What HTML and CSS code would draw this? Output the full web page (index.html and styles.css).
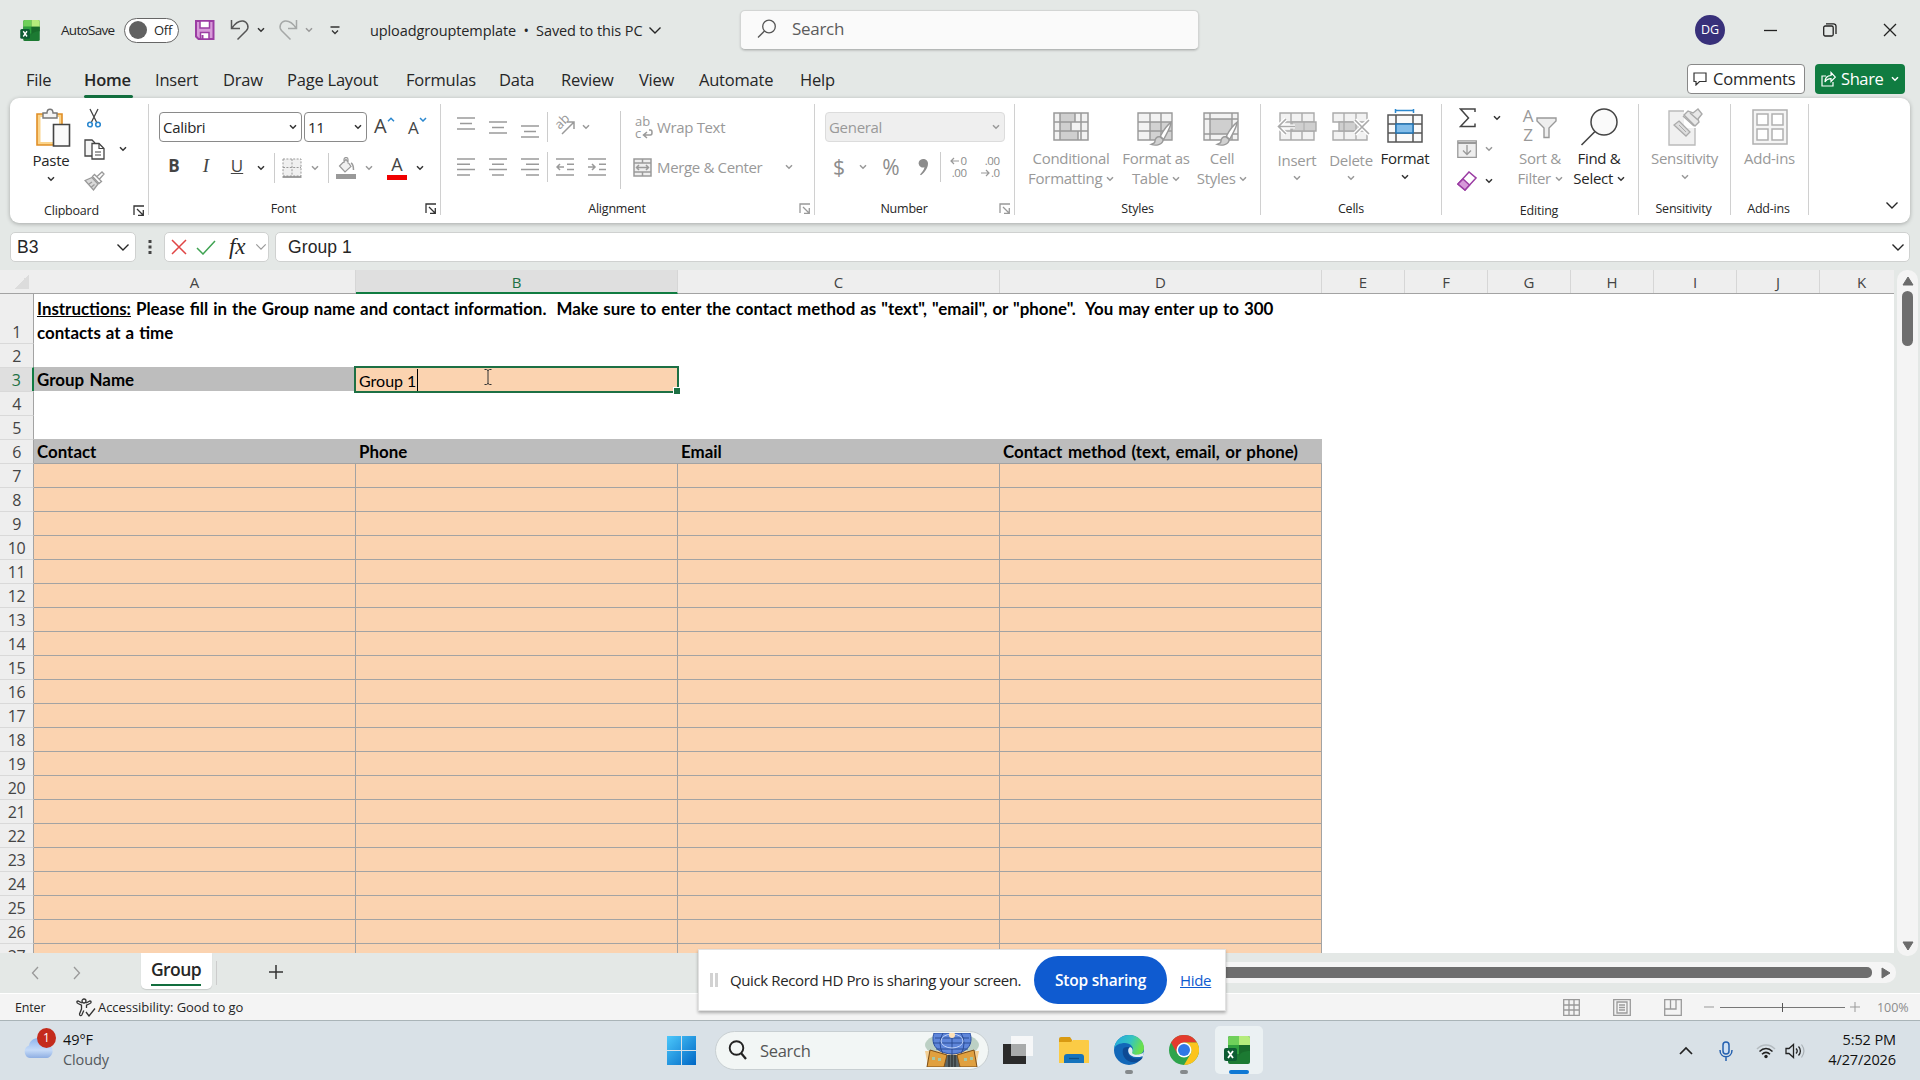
FILE: index.html
```html
<!DOCTYPE html>
<html lang="en">
<head>
    <meta charset="UTF-8">
    <meta name="viewport" content="width=device-width, initial-scale=1.0">
    <title>uploadgrouptemplate - Excel</title>
    <link rel="stylesheet" href="styles.css">
</head>
<body>
    <!-- Shared icons -->
    <svg class="defs" width="0" height="0">
        <symbol id="chev" viewBox="0 0 8 6"><path d="M1 1.2l3 3 3-3" fill="none" stroke="currentColor" stroke-width="1.5"/></symbol>
        <symbol id="chev-lg" viewBox="0 0 14 9"><path d="M1.5 1.5l5.5 5.5 5.5-5.5" fill="none" stroke="currentColor" stroke-width="1.4"/></symbol>
        <symbol id="launcher" viewBox="0 0 12 12"><path d="M1 10V1h10M4 4l6 6M10.3 5v5.3H5" fill="none" stroke="currentColor" stroke-width="1.3"/></symbol>
        <symbol id="excel" viewBox="0 0 26 28">
            <rect x="4" y="0" width="22" height="28" rx="2" fill="#1c7a32"/>
            <path d="M4 2a2 2 0 0 1 2-2h9v9H4z" fill="#6fd05a"/>
            <path d="M15 0h9a2 2 0 0 1 2 2v7H15z" fill="#b5ec7c"/>
            <path d="M4 9h11v9H4z" fill="#2e9f3e"/>
            <path d="M15 9h11v6c-6 0-11 2-11 6z" fill="#186b2b"/>
            <rect x="0" y="12" width="13" height="13" rx="2" fill="#0d5c33"/>
            <path d="M4 15l5 7M9 15l-5 7" stroke="#fff" stroke-width="1.8"/>
        </symbol>
        <symbol id="brush" viewBox="0 0 20 24"><path d="M18.5 2c-4 3-8 9-10 13l3 3C14 13 18 7 18.5 2z" fill="#fff" stroke="#999" stroke-width="1.3"/><path d="M8 15.5c-3-.5-4.500 2-4.500 4S1.500 22 0 22.500c4 1.500 11 .5 11-4.500z" fill="#d0d0d0" stroke="#999" stroke-width="1.3"/></symbol>
    </svg>

    <header class="titlebar">
        <svg class="logo" width="20" height="21"><use href="#excel"/></svg>
        <span class="autosave">AutoSave</span>
        <span class="toggle"><i></i>Off</span>
        <svg width="22" height="22" viewBox="0 0 22 22"><path d="M2 2h17.500v18H4.500L2 17.500z" fill="#d79ad9" stroke="#9b3da3" stroke-width="2"/><path d="M6 2h9.500v7H6z" fill="#fff" stroke="#9b3da3" stroke-width="1.5"/><path d="M6.500 13.500h8.500V20H6.500z" fill="#fff" stroke="#9b3da3" stroke-width="1.5"/><path d="M8.500 16v4" stroke="#9b3da3" stroke-width="2"/></svg>
        <svg width="20" height="22" viewBox="0 0 20 22"><path d="M1.500 1v8.500h8.500M2 9C5 4.500 9 1.500 13 2c4.500.8 6.500 6 3.500 9.500L7.500 20.500" fill="none" stroke="#555" stroke-width="1.5"/></svg>
        <svg class="chev" width="8" height="6"><use href="#chev"/></svg>
        <svg width="20" height="22" viewBox="0 0 20 22"><path d="M18.500 1v8.500H10M18 9C15 4.500 11 1.500 7 2 2.500 2.800.5 8 3.500 11.500L12.500 20.500" fill="none" stroke="#a5a8a7" stroke-width="1.5"/></svg>
        <svg class="chev dim" width="8" height="6"><use href="#chev"/></svg>
        <svg width="10" height="9" viewBox="0 0 10 9"><path d="M.5 1h9M2 4.500l3 3 3-3" fill="none" stroke="#333" stroke-width="1.3"/></svg>
        <span class="doc-name">uploadgrouptemplate&nbsp; •&nbsp; Saved to this PC</span>
        <svg width="14" height="9"><use href="#chev-lg"/></svg>
        <div class="title-search">
            <svg width="20" height="20" viewBox="0 0 20 20"><circle cx="12" cy="7.500" r="6.300" fill="none" stroke="#555" stroke-width="1.3"/><path d="M7.500 12L1 18.500" stroke="#555" stroke-width="1.3"/></svg>
            Search
        </div>
        <span class="avatar">DG</span>
        <svg width="13" height="13" viewBox="0 0 13 13"><path d="M0 6.500h13" stroke="#222" stroke-width="1.3"/></svg>
        <svg width="14" height="14" viewBox="0 0 14 14"><rect x=".7" y="3" width="9.500" height="10" rx="1.500" fill="none" stroke="#222" stroke-width="1.3"/><path d="M3 .8h7.500a2.500 2.500 0 0 1 2.500 2.500V11" fill="none" stroke="#222" stroke-width="1.3"/></svg>
        <svg width="14" height="14" viewBox="0 0 14 14"><path d="M1 1l12 12M13 1L1 13" stroke="#222" stroke-width="1.3"/></svg>
    </header>

    <nav class="tabs">
        <ul>
            <li>File</li>
            <li class="active">Home</li>
            <li>Insert</li>
            <li>Draw</li>
            <li>Page Layout</li>
            <li>Formulas</li>
            <li>Data</li>
            <li>Review</li>
            <li>View</li>
            <li>Automate</li>
            <li>Help</li>
        </ul>
        <button class="comments">
            <svg width="14" height="14" viewBox="0 0 14 14"><path d="M1 1h12v8.500H6.500L3 13V9.500H1z" fill="none" stroke="#333" stroke-width="1.2"/></svg>
            <span>Comments</span>
        </button>
        <button class="share">
            <svg width="15" height="16" viewBox="0 0 15 16"><path d="M5 5H1v10h11v-4M4 11c0-4 2-6.500 6-6.500V1.500l4.300 4.700L10 10.500V7.700C7 7.700 5.300 8.500 4 11z" fill="none" stroke="#fff" stroke-width="1.2"/></svg>
            <span>Share</span>
            <svg width="8" height="6"><use href="#chev"/></svg>
        </button>
    </nav>

    <section class="ribbon">
        <div class="group clipboard">
            <div class="body">
                <div class="big paste">
                    <svg width="36" height="40" viewBox="0 0 36 40"><path d="M2 6h25v31H2z" fill="#fbd48b" stroke="#e08e26" stroke-width="1.6"/><path d="M5.500 9h18.500v25H5.500z" fill="#fff"/><path d="M8 10V5h4c0-5 6-5 6 0h4v5z" fill="#f4f4f4" stroke="#777" stroke-width="1.4"/><path d="M18.500 16.500h16V38h-16z" fill="#fafafa" stroke="#444" stroke-width="1.6"/></svg>
                    <span>Paste</span>
                    <svg class="chev" width="8" height="6"><use href="#chev"/></svg>
                </div>
                <div class="clip-tools">
                    <svg width="14" height="20" viewBox="0 0 14 20"><path d="M3 1l6.500 13M11 1L4.500 14" stroke="#444" stroke-width="1.3"/><circle cx="3" cy="16.500" r="2.300" fill="none" stroke="#2b88cf" stroke-width="1.6"/><circle cx="11" cy="16.500" r="2.300" fill="none" stroke="#2b88cf" stroke-width="1.6"/></svg>
                    <span></span>
                    <svg width="21" height="21" viewBox="0 0 21 21"><path d="M8 17H1V1h7l3 3" fill="#f5f5f5" stroke="#444" stroke-width="1.3"/><path d="M8 4.500h7l5 5V20H8z" fill="#fff" stroke="#444" stroke-width="1.3"/><path d="M15 4.500v5h5M11 13h6M11 16h6" fill="none" stroke="#444" stroke-width="1.2"/></svg>
                    <svg class="chev" width="8" height="6"><use href="#chev"/></svg>
                    <svg width="21" height="20" viewBox="0 0 21 20"><path d="M1 9.500l7-3 6 6.500-4.500 6zM5 13l3-2M7.500 16l3-2.500" fill="#d9d9d9" stroke="#999" stroke-width="1.3"/><path d="M8.500 5.500l2-2 7 7-2.500 2zM13 5.500L18 1l2 2-4.500 5" fill="#fff" stroke="#999" stroke-width="1.3"/></svg>
                    <span></span>
                </div>
            </div>
            <div class="label">Clipboard <svg class="launch" width="12" height="12"><use href="#launcher"/></svg></div>
        </div>

        <div class="group font">
            <div class="body">
                <div class="rows">
                    <div class="font-row1">
                        <div class="combo">Calibri <svg class="chev" width="8" height="6"><use href="#chev"/></svg></div>
                        <div class="combo">11 <svg class="chev" width="8" height="6"><use href="#chev"/></svg></div>
                        <span class="grow">A<svg width="8" height="5" viewBox="0 0 8 5"><path d="M1 4.200l3-3 3 3" fill="none" stroke="#2b88cf" stroke-width="1.5"/></svg></span>
                        <span class="grow shrink">A<svg width="8" height="5" viewBox="0 0 8 5"><path d="M1 1l3 3 3-3" fill="none" stroke="#2b88cf" stroke-width="1.5"/></svg></span>
                    </div>
                    <div class="font-row2">
                        <b>B</b>
                        <i>I</i>
                        <u>U</u>
                        <svg class="chev" width="8" height="6"><use href="#chev"/></svg>
                        <span class="sep"></span>
                        <svg width="20" height="20" viewBox="0 0 20 20"><path d="M1 1h18v17H1z" fill="#f0f0f0" stroke="#999" stroke-dasharray="2 1.4"/><path d="M10 1v17M1 9.500h18" stroke="#999" stroke-dasharray="2 1.4"/><path d="M.5 19h19" stroke="#888" stroke-width="1.6"/></svg>
                        <svg class="chev dim" width="8" height="6"><use href="#chev"/></svg>
                        <span class="sep"></span>
                        <svg width="20" height="22" viewBox="0 0 20 22"><path d="M3.500 9L10 2.500l5 7-6 5.500zM8 6V2.500a2 2 0 0 1 4 0v4" fill="#f0f0f0" stroke="#999" stroke-width="1.2"/><path d="M15 6c2 1 2.500 3 2.500 7" fill="none" stroke="#999" stroke-width="1.5"/><path d="M0 17h20v5H0z" fill="#999"/></svg>
                        <svg class="chev dim" width="8" height="6"><use href="#chev"/></svg>
                        <span class="font-color">A</span>
                        <svg class="chev" width="8" height="6"><use href="#chev"/></svg>
                    </div>
                </div>
            </div>
            <div class="label">Font <svg class="launch" width="12" height="12"><use href="#launcher"/></svg></div>
        </div>

        <div class="group alignment">
            <div class="body">
                <div class="rows">
                    <div class="align-row first">
                        <svg class="up" width="18" height="13" viewBox="0 0 18 13"><path d="M0 1h18M3 6.500h12M0 12h18"/></svg>
                        <svg width="18" height="13" viewBox="0 0 18 13"><path d="M0 1h18M3 6.500h12M0 12h18"/></svg>
                        <svg class="down" width="18" height="13" viewBox="0 0 18 13"><path d="M0 1h18M3 6.500h12M0 12h18"/></svg>
                        <span class="sep"></span>
                        <span class="orient"><em>ab</em><svg width="20" height="20" viewBox="0 0 20 20"><path d="M7 18L18.500 6.500M12 6h7v7"/></svg></span>
                        <svg class="chev dim" width="8" height="6"><use href="#chev"/></svg>
                    </div>
                    <div class="align-row">
                        <svg width="18" height="18" viewBox="0 0 18 18"><path d="M0 1h18M0 6.300h13M0 11.600h18M0 17h13"/></svg>
                        <svg width="18" height="18" viewBox="0 0 18 18"><path d="M0 1h18M3 6.300h12M0 11.600h18M3 17h12"/></svg>
                        <svg width="18" height="18" viewBox="0 0 18 18"><path d="M0 1h18M5 6.300h13M0 11.600h18M5 17h13"/></svg>
                        <span class="sep"></span>
                        <svg width="18" height="18" viewBox="0 0 18 18"><path d="M0 1h18M11 6.300h7M11 11.600h7M0 17h18M8 9H1.500M4 6L1 9l3 3"/></svg>
                        <svg width="18" height="18" viewBox="0 0 18 18"><path d="M0 1h18M11 6.300h7M11 11.600h7M0 17h18M0 9h6.500M4 6l3 3-3 3"/></svg>
                    </div>
                </div>
                <div class="wrap-merge">
                    <div>
                        <span class="wrap-icon"><span>ab</span><span>c</span><svg width="11" height="10" viewBox="0 0 11 10"><path d="M7 1h1.500c2 0 2 5 0 5H2M5 3L1.500 6l3.500 3"/></svg></span>
                        <span>Wrap Text</span>
                    </div>
                    <div>
                        <svg width="19" height="19" viewBox="0 0 19 19"><path d="M1 1h17v17H1zM1 5h17M1 14h17M9.500 1v4M9.500 14v4" fill="#eee"/><path d="M3.500 9.500h12M6 7L3.500 9.500 6 12M13 7l2.500 2.500L13 12"/></svg>
                        <span>Merge &amp; Center</span>
                        <svg class="chev dim" width="8" height="6"><use href="#chev"/></svg>
                    </div>
                </div>
            </div>
            <div class="label">Alignment <svg class="launch dim" width="12" height="12"><use href="#launcher"/></svg></div>
        </div>

        <div class="group number">
            <div class="body">
                <div class="rows">
                    <div class="combo off">General <svg class="chev dim" width="8" height="6"><use href="#chev"/></svg></div>
                    <div class="number-row">
                        <span class="dollar">$</span>
                        <svg class="chev dim" width="8" height="6"><use href="#chev"/></svg>
                        <span class="percent">%</span>
                        <svg width="11" height="18" viewBox="0 0 11 18"><path d="M5 1a4.300 4.300 0 1 0 1.500 8.300C6 12 4 14.500 2 16.500l1 .8C7 14 10 10 10 5.500 10 3 8 1 5 1z" fill="#8c8c8c"/></svg>
                        <span class="sep"></span>
                        <span class="dec"><span><svg width="9" height="8" viewBox="0 0 9 8"><path d="M9 4H1M4 1L1 4l3 3"/></svg>0</span><span>.00</span></span>
                        <span class="dec"><span>.00</span><span><svg width="9" height="8" viewBox="0 0 9 8"><path d="M0 4h8M5 1l3 3-3 3"/></svg>.0</span></span>
                    </div>
                </div>
            </div>
            <div class="label">Number <svg class="launch dim" width="12" height="12"><use href="#launcher"/></svg></div>
        </div>

        <div class="group styles">
            <div class="body">
                <div class="big off">
                    <svg width="36" height="36" viewBox="0 0 36 36"><path d="M1 4h34v27H1z" fill="#f2f2f2"/><path d="M7 4h15v9H7zM7 13h11v9H7zM7 22h18v9H7z" fill="#cfcfcf"/><path d="M1 4h34v27H1zM1 13h34M1 22h34M7 4v27M22 4v9M18 13v9M25 22v9M28 4v27" fill="none" stroke="#999" stroke-width="1.5"/></svg>
                    <span>Conditional<br>Formatting <svg class="chev" width="8" height="6"><use href="#chev"/></svg></span>
                </div>
                <div class="big off">
                    <svg width="38" height="38" viewBox="0 0 38 38"><path d="M1 5h34v27H1z" fill="#f2f2f2"/><path d="M13 14h22v18H13z" fill="#d2d2d2"/><path d="M1 5h34v27H1zM1 14h34M1 23h34M13 5v27M24 5v27" fill="none" stroke="#999" stroke-width="1.4"/><use href="#brush" x="12" y="12" width="26" height="26"/></svg>
                    <span>Format as<br>Table <svg class="chev" width="8" height="6"><use href="#chev"/></svg></span>
                </div>
                <div class="big off">
                    <svg width="38" height="38" viewBox="0 0 38 38"><path d="M1 5h34v27H1z" fill="#f2f2f2"/><path d="M7 11h22v15H7z" fill="#cfcfcf"/><path d="M1 5h34v27H1zM1 11h34M1 26h34M7 5v27M29 5v27" fill="none" stroke="#999" stroke-width="1.4"/><use href="#brush" x="12" y="12" width="26" height="26"/></svg>
                    <span>Cell<br>Styles <svg class="chev" width="8" height="6"><use href="#chev"/></svg></span>
                </div>
            </div>
            <div class="label">Styles</div>
        </div>

        <div class="group cells">
            <div class="body">
                <div class="big off low">
                    <svg width="40" height="36" viewBox="0 0 40 36"><path d="M3 4h34v27H3z" fill="#f2f2f2"/><path d="M3 4h34v27H3zM14 4v27M25 4v27M3 13h34M3 22h34" fill="none" stroke="#aaa" stroke-width="1.4"/><path d="M15 13h24v9H15z" fill="#cfcfcf" stroke="#aaa" stroke-width="1.4"/><path d="M27 13v9" stroke="#aaa"/><path d="M18 17.500H3M9 10l-8 7.500L9 25" fill="none" stroke="#fff" stroke-width="4"/><path d="M18 17.500H2M9 10l-7.500 7.500L9 25" fill="none" stroke="#aaa" stroke-width="1.6"/></svg>
                    <span>Insert</span>
                    <svg class="chev" width="8" height="6"><use href="#chev"/></svg>
                </div>
                <div class="big off low">
                    <svg width="38" height="36" viewBox="0 0 38 36"><path d="M1 4h34v9H1zM1 22h34v9H1z" fill="#f2f2f2" stroke="#aaa" stroke-width="1.4"/><path d="M7 13h20v9H7z" fill="#cfcfcf" stroke="#aaa" stroke-width="1.4"/><path d="M12 4v27M24 4v27" stroke="#aaa" stroke-width="1.3"/><path d="M23 11l14 14M37 11L23 25" stroke="#fff" stroke-width="4.5"/><path d="M23 11l14 14M37 11L23 25" stroke="#aaa" stroke-width="1.6"/></svg>
                    <span>Delete</span>
                    <svg class="chev" width="8" height="6"><use href="#chev"/></svg>
                </div>
                <div class="big">
                    <svg width="36" height="36" viewBox="0 0 36 36"><path d="M1 6h34v27H1z" fill="#fafafa"/><path d="M1 6h34v27H1zM9 6v27M26 6v27M1 15h34M1 24h34" fill="none" stroke="#555" stroke-width="1.5"/><path d="M9 15h17v9H9z" fill="#83bde9" stroke="#2377b8" stroke-width="1.5"/><path d="M8.500 1.500h18M8.500 0v4M26.500 0v4" stroke="#2b88cf" stroke-width="1.5"/></svg>
                    <span>Format</span>
                    <svg class="chev" width="8" height="6"><use href="#chev"/></svg>
                </div>
            </div>
            <div class="label">Cells</div>
        </div>

        <div class="group editing">
            <div class="body">
                <div class="edit-tools">
                    <svg width="17" height="20" viewBox="0 0 17 20"><path d="M16 4V1H1.500l8 9-8 8.500H16v-3" fill="none" stroke="#444" stroke-width="1.5"/></svg>
                    <svg class="chev nudge" width="8" height="6"><use href="#chev"/></svg>
                    <svg width="20" height="18" viewBox="0 0 20 18"><path d="M.8.8h18.500v16.500H.8z" fill="#eee" stroke="#999" stroke-width="1.3"/><path d="M1 3h18" stroke="#999" stroke-width="2"/><path d="M10 5v9M6 10.500l4 4 4-4" fill="none" stroke="#999" stroke-width="1.3"/></svg>
                    <svg class="chev dim" width="8" height="6"><use href="#chev"/></svg>
                    <svg width="20" height="20" viewBox="0 0 20 20"><path d="M1 13L12 1l7 6L8 19z" fill="#fff" stroke="#9b3da3" stroke-width="1.5"/><path d="M1 13l5-5 6.500 6L8 19z" fill="#d79ad9" stroke="#9b3da3" stroke-width="1.5"/></svg>
                    <svg class="chev" width="8" height="6"><use href="#chev"/></svg>
                </div>
                <div class="big off">
                    <span class="az"><em><span>A</span><span>Z</span></em><svg width="21" height="22" viewBox="0 0 21 22"><path d="M1 1h19v3l-7 7v9.500H8V11L1 4z" fill="#eee" stroke="#999" stroke-width="1.4"/></svg></span>
                    <span>Sort &amp;<br>Filter <svg class="chev" width="8" height="6"><use href="#chev"/></svg></span>
                </div>
                <div class="big">
                    <svg width="38" height="38" viewBox="0 0 38 38"><circle cx="24" cy="14" r="13" fill="#fafafa" stroke="#444" stroke-width="1.5"/><path d="M15 23.500L1.500 37" stroke="#444" stroke-width="1.6"/></svg>
                    <span>Find &amp;<br>Select <svg class="chev" width="8" height="6"><use href="#chev"/></svg></span>
                </div>
            </div>
            <div class="label">Editing</div>
        </div>

        <div class="group sensitivity">
            <div class="body">
                <div class="big off">
                    <svg width="36" height="38" viewBox="0 0 36 38"><path d="M2 3h26v34H2z" fill="#f0f0f0" stroke="#bbb" stroke-width="1.4"/><path d="M17 0h19v20H17z" fill="#fff"/><path d="M12 13l11 11-4 4L7 17z" fill="#ddd" stroke="#aaa" stroke-width="1.3"/><path d="M12 17l7 7" stroke="#aaa"/><path d="M17 7l4-4 5 2 5-4 4 5-4 5 1 3-4 4z" fill="#e8e8e8" stroke="#aaa" stroke-width="1.4"/><path d="M16 8l11 10M23 5l8 7" stroke="#aaa" stroke-width="1.5"/></svg>
                    <span>Sensitivity</span>
                    <svg class="chev" width="8" height="6"><use href="#chev"/></svg>
                </div>
            </div>
            <div class="label">Sensitivity</div>
        </div>

        <div class="group addins">
            <div class="body">
                <div class="big off">
                    <svg width="36" height="38" viewBox="0 0 36 38"><path d="M1 2h34v34H1z" fill="#f5f5f5" stroke="#b0b0b0" stroke-width="1.5"/><path d="M5 6h11v11H5zM20 6h11v11H20zM5 21h11v11H5zM20 21h11v11H20z" fill="#fff" stroke="#b0b0b0" stroke-width="1.5"/></svg>
                    <span>Add-ins</span>
                </div>
            </div>
            <div class="label">Add-ins</div>
        </div>
        <svg class="collapse" width="14" height="9"><use href="#chev-lg"/></svg>
    </section>

    <section class="formula-bar">
        <div class="name-box">B3 <svg width="14" height="9"><use href="#chev-lg"/></svg></div>
        <svg class="dots" width="4" height="14" viewBox="0 0 4 14"><path d="M.5 0h3v3h-3zM.5 5.500h3v3h-3zM.5 11h3v3h-3z" fill="#444"/></svg>
        <div class="fx-box">
            <svg width="16" height="16" viewBox="0 0 16 16"><path d="M1 1l14 14M15 1L1 15" stroke="#e04545" stroke-width="1.5"/></svg>
            <svg width="20" height="15" viewBox="0 0 20 15"><path d="M1 8l6 6L19 1" fill="none" stroke="#3fa352" stroke-width="1.5"/></svg>
            <i>fx</i>
            <svg class="dim" width="12" height="8"><use href="#chev-lg"/></svg>
        </div>
        <div class="formula-input">Group 1 <svg width="14" height="9"><use href="#chev-lg"/></svg></div>
    </section>

    <main class="workspace">
        <div class="sheet" id="sheet">
            <div class="cols">
                <span class="corner"></span>
                <span>A</span><span class="sel">B</span><span>C</span><span>D</span>
                <span>E</span><span>F</span><span>G</span><span>H</span><span>I</span><span>J</span><span>K</span>
            </div>
            <div class="line tall">
                <span class="num">1</span>
                <p class="instructions"><u>Instructions:</u> Please fill in the Group name and contact information.&nbsp; Make sure to enter the contact method as "text", "email", or "phone".&nbsp; You may enter up to 300<br>contacts at a time</p>
            </div>
            <div class="line"><span class="num">2</span></div>
            <div class="line">
                <span class="num sel">3</span>
                <span class="head">Group Name</span>
                <span class="editing-cell">Group 1<svg class="ibeam" width="8" height="16" viewBox="0 0 8 16"><path d="M.5.5h2l1.500 1 1.500-1h2M4 1v14M.5 15.500h2l1.500-1 1.500 1h2" fill="none" stroke="#333"/></svg></span>
            </div>
            <div class="line"><span class="num">4</span></div>
            <div class="line"><span class="num">5</span></div>
            <div class="line">
                <span class="num">6</span>
                <span class="head">Contact</span>
                <span class="head">Phone</span>
                <span class="head">Email</span>
                <span class="head">Contact method (text, email, or phone)</span>
            </div>
        </div>
        <div class="vscroll">
            <svg width="12" height="10" viewBox="0 0 12 10"><path d="M6 1l5 8H1z" fill="#6b6b6b" stroke="#6b6b6b" stroke-linejoin="round"/></svg>
            <span class="thumb"></span>
            <svg class="bottom" width="12" height="10" viewBox="0 0 12 10"><path d="M6 9L1 1h10z" fill="#6b6b6b" stroke="#6b6b6b" stroke-linejoin="round"/></svg>
        </div>
    </main>

    <div class="sheet-tabs">
        <svg width="8" height="14" viewBox="0 0 8 14"><path d="M7 1L1.500 7 7 13" fill="none" stroke="#999" stroke-width="1.3"/></svg>
        <svg width="8" height="14" viewBox="0 0 8 14"><path d="M1 1l5.500 6L1 13" fill="none" stroke="#999" stroke-width="1.3"/></svg>
        <div class="sheet-tab"><span>Group</span></div>
        <svg class="add" width="14" height="14" viewBox="0 0 14 14"><path d="M7 0v14M0 7h14" stroke="#333" stroke-width="1.5"/></svg>
        <div class="hscroll">
            <span class="thumb"></span>
            <svg width="10" height="12" viewBox="0 0 10 12"><path d="M9 6L1 1v10z" fill="#6b6b6b" stroke="#6b6b6b" stroke-linejoin="round"/></svg>
        </div>
    </div>

    <div class="statusbar">
        <span class="mode">Enter</span>
        <svg width="20" height="19" viewBox="0 0 20 19"><circle cx="8" cy="3" r="2" fill="none" stroke="#333" stroke-width="1.3"/><path d="M6 5L2 3C.5 3 .5 5 2 5.500l3.500 1.700V11L3.500 16c0 2 1.700 2 2.300 1l2-4.500M10 5l4-2c1.500 0 1.500 2 0 2.500l-3.500 1.700V10M10 14l3 4 6-7.500" fill="none" stroke="#333" stroke-width="1.3"/></svg>
        <span class="access">Accessibility: Good to go</span>
        <div class="views">
            <svg width="17" height="17" viewBox="0 0 17 17"><path d="M.7.7h15.600v15.600H.7zM6 .7v15.600M11 .7v15.600M.7 6h15.600M.7 11h15.600"/></svg>
            <svg width="18" height="17" viewBox="0 0 18 17"><path d="M.7.7h16.600v15.600H.7zM4 3h10v11H4zM6 6h6M6 8.500h6M6 11h6"/></svg>
            <svg width="18" height="17" viewBox="0 0 18 17"><path d="M.7.7h16.600v15.600H.7zM1 10h11V1M6.500 1v9"/></svg>
        </div>
        <svg width="10" height="10" viewBox="0 0 10 10"><path d="M0 5h10" stroke="#999"/></svg>
        <span class="zoom"></span>
        <svg width="10" height="10" viewBox="0 0 10 10"><path d="M0 5h10M5 0v10" stroke="#999"/></svg>
        <span class="pct">100%</span>
    </div>

    <footer class="taskbar">
        <div class="weather">
            <svg width="32" height="34" viewBox="0 0 32 34"><defs><linearGradient id="cl" x1="0" y1="0" x2="0" y2="1"><stop offset="0" stop-color="#8fb5ee"/><stop offset=".6" stop-color="#c6dbf8"/><stop offset="1" stop-color="#8eaee2"/></linearGradient></defs><path d="M7 28a6.500 6.500 0 0 1-1-12.500C7 7 20 5 22 14.500c9-1.500 10.500 11.500 2 13.500z" fill="url(#cl)"/></svg>
            <span class="badge">1</span>
            <p>49°F<br><span>Cloudy</span></p>
        </div>
        <div class="apps">
            <svg width="29" height="29" viewBox="0 0 29 29"><defs><linearGradient id="win" x1="0" y1="0" x2="1" y2="1"><stop offset="0" stop-color="#4cc8fb"/><stop offset="1" stop-color="#0067c5"/></linearGradient></defs><path d="M0 0h14v14H0zM15 0h14v14H15zM0 15h14v14H0zM15 15h14v14H15z" fill="url(#win)"/></svg>
            <div class="task-search">
                <svg width="20" height="20" viewBox="0 0 20 20"><circle cx="8.500" cy="8" r="6.800" fill="none" stroke="#222" stroke-width="1.9"/><path d="M13 13l5 6" stroke="#222" stroke-width="2.2"/></svg>
                <span>Search</span>
                <svg class="art" width="58" height="34" viewBox="0 0 58 34"><ellipse cx="29" cy="12" rx="27" ry="12" fill="#bcd0c4"/><path d="M2 18h54l-3 15H5z" fill="#f3cf95"/><path d="M11 0h36c3 9 0 20-18 21C11 20 8 9 11 0z" fill="#5f86da" stroke="#2b4fa0"/><path d="M10 10h38M12 5h34M13 16h32M29 0v22M20 0q-6 10 0 21M38 0q6 10 0 21" fill="none" stroke="#27478f" stroke-width=".9"/><ellipse cx="29" cy="8" rx="11" ry="7" fill="none" stroke="#c6d8fa" stroke-width=".9"/><circle cx="29" cy="2" r="3" fill="#ffe2b8"/><path d="M23 22h12l3 12H20z" fill="#5a6668"/><path d="M26 22v12M29 22v12M32 22v12" stroke="#222"/><path d="M7 17l17 5-3 12H4zM51 17l-17 5 3 12h17z" fill="#e0a03f" stroke="#7b4d18"/><path d="M9 24h3v3H9zM15 25h3v3h-3zM41 25h3v3h-3zM47 24h3v3h-3z" fill="#a7c7a5"/></svg>
            </div>
            <svg class="app" width="30" height="30" viewBox="0 0 30 30"><path d="M0 9h23v20H0z" fill="#2b2b2b"/><path d="M8 1h22v20H8z" fill="#fafafa" opacity=".85"/><path d="M8 9h15v12H8z" fill="#a9abab"/></svg>
            <svg class="app" width="30" height="28" viewBox="0 0 30 28"><path d="M0 3a2 2 0 0 1 2-2h9l2 3v4H0z" fill="#d99a12"/><path d="M0 6h12l2-2h15a1 1 0 0 1 1 1v22H0z" fill="#fbcb45"/><path d="M5 27v-6a3 3 0 0 1 3-3h14a3 3 0 0 1 3 3v6z" fill="#1573bd"/><path d="M10 22.500h10" stroke="#0d4f87" stroke-width="1.3"/></svg>
            <span class="app running">
                <svg width="30" height="30" viewBox="0 0 30 30"><defs><linearGradient id="eg" x1="0" y1="0" x2="1" y2=".3"><stop offset="0" stop-color="#23a7e2"/><stop offset=".6" stop-color="#35c4c0"/><stop offset="1" stop-color="#6be04c"/></linearGradient></defs><circle cx="15" cy="15" r="15" fill="#1267b8"/><path d="M0 14C1 5 8 0 15 0c9 0 15 6 15 13 0 5-4 7-8 7-3 0-5-1-4-3 3-5-2-9-7-9-5 0-10 2-11 6z" fill="url(#eg)"/><path d="M9 14c-2 8 5 15 14 13 3-1 5-3 6-5-5 3-15 2-15-6 0-2 1-3 2-4-3 0-6 0-7 2z" fill="#0d4a94"/><path d="M16 12c-4 3-1 10 6 10 3 0 5 0 7-1l1-4c-3 3-10 4-12 1 1-2 1-5-2-6z" fill="#e4edf3"/></svg>
            </span>
            <span class="app running">
                <svg width="30" height="30" viewBox="0 0 30 30"><circle cx="15" cy="15" r="15" fill="#2ea44c"/><path d="M2 7.500A15 15 0 0 1 28 7.500H15A8 8 0 0 0 8.500 19z" fill="#e33b2e"/><path d="M28 7.500A15 15 0 0 1 15 30l6.500-11A8 8 0 0 0 15 7.500z" fill="#fcc41d"/><circle cx="15" cy="15" r="7.500" fill="#fff"/><circle cx="15" cy="15" r="6" fill="#2f78e6"/></svg>
            </span>
            <span class="app current"><svg width="26" height="28"><use href="#excel"/></svg></span>
        </div>
        <div class="tray">
            <svg width="14" height="9" viewBox="0 0 14 9"><path d="M1 8l6-6 6 6" fill="none" stroke="#222" stroke-width="1.7"/></svg>
            <svg width="14" height="20" viewBox="0 0 14 20"><rect x="4" y="1" width="6" height="12" rx="3" fill="#cfe0f3" stroke="#2460b0" stroke-width="1.5"/><path d="M1 9c0 9 12 9 12 0M7 16v4" fill="none" stroke="#2460b0" stroke-width="1.5"/></svg>
            <svg width="20" height="16" viewBox="0 0 20 16"><path d="M1 6C6 .5 14 .5 19 6" fill="none" stroke="#b5bcc1" stroke-width="1.5"/><path d="M3.500 8.500c4-4 9-4 13 0M6 11.300c2.500-2.500 5.500-2.500 8 0" fill="none" stroke="#222" stroke-width="1.5"/><circle cx="10" cy="13.500" r="1.700" fill="#222"/></svg>
            <svg width="20" height="16" viewBox="0 0 20 16"><path d="M1 5.500h3l4.500-4v13l-4.500-4H1z" fill="none" stroke="#222" stroke-width="1.3"/><path d="M11 5.500c1.500 1.500 1.500 3.500 0 5M13.500 3.500c2.500 2.500 2.500 6.500 0 9" fill="none" stroke="#222" stroke-width="1.3"/><path d="M16.500 1.500c3 4 3 9 0 13" fill="none" stroke="#aab1b6" stroke-width="1.2"/></svg>
            <p>5:52 PM<br>4/27/2026</p>
        </div>
    </footer>

    <div class="sharing">
        <span class="grip"></span>
        <span class="msg">Quick Record HD Pro is sharing your screen.</span>
        <button>Stop sharing</button>
        <a>Hide</a>
    </div>

    <script>
        // blank contact rows under the table header
        const sheet = document.getElementById('sheet');
        for (let n = 7; n <= 27; n++) {
            const line = document.createElement('div');
            line.className = 'line';
            line.innerHTML = `<span class="num">${n}</span>` + '<span class="entry"></span>'.repeat(4);
            sheet.appendChild(line);
        }
    </script>
</body>
</html>
```
FILE: styles.css
```css
* { box-sizing: border-box; }
body { width: 1920px; height: 1080px; margin: 0; overflow: hidden; position: relative; background: #e4e8e6; color: #262626; font-family: "Open Sans", "Noto Sans", sans-serif; font-size: 15px; }
svg { display: block; flex: none; }
.defs { position: absolute; }
p { margin: 0; }
button { font: inherit; }
.chev { color: #333; }
.dim { color: #999 !important; }

/* title bar */
.titlebar { display: flex; align-items: center; height: 60px; }
.titlebar > * { flex: none; }
.titlebar .logo { margin-left: 20px; }
.titlebar .autosave { width: 63px; margin-left: 21px; font-size: 13.5px; letter-spacing: -0.7px; white-space: nowrap; }
.toggle { display: flex; align-items: center; gap: 7px; width: 55px; height: 25px; margin-right: 15px; padding-left: 4px; border: 1px solid #666; border-radius: 13px; background: #fff; font-size: 13px; letter-spacing: -0.3px; }
.toggle i { width: 18px; height: 18px; border-radius: 50%; background: #616161; }
.titlebar > svg:nth-of-type(3) { margin-left: 14px; }
.titlebar > svg:nth-of-type(4) { margin-left: 7px; }
.titlebar > svg:nth-of-type(5) { margin-left: 13px; }
.titlebar > svg:nth-of-type(6) { margin-left: 7px; }
.titlebar > svg:nth-of-type(7) { margin-left: 17px; }
.doc-name { width: 278px; margin-left: 30px; font-size: 14.5px; letter-spacing: -0.1px; white-space: nowrap; }
.title-search { display: flex; align-items: center; gap: 15px; width: 459px; height: 40px; margin-left: 78px; padding: 0 0 3px 16px; border: 1px solid #d3d5d4; border-bottom-color: #b5b8b7; border-radius: 5px; background: #fafafa; box-shadow: 0 1px 2px rgba(0,0,0,0.15); font-size: 17px; letter-spacing: -0.3px; color: #5c5c5c; }
.avatar { width: 30px; height: 30px; margin: 0 39px 0 496px; border-radius: 50%; background: #38307a; color: #fff; font-size: 12.5px; line-height: 30px; text-align: center; }
.avatar ~ svg { margin-right: 46px; }

/* tabs */
.tabs { display: flex; height: 37px; align-items: center; }
.tabs > * { flex: none; }
.tabs ul { display: grid; grid-template-columns: 58px 71px 68px 64px 119px 93px 62px 78px 60px 101px 60px; width: 1687px; margin: 0; padding: 3px 0 0 26px; list-style: none; font-size: 16.5px; letter-spacing: -0.22px; line-height: 34px; white-space: nowrap; }
.tabs .active { width: 49px; font-weight: 600; letter-spacing: -0.2px; position: relative; }
.tabs .active::after { content: ""; position: absolute; left: 0; bottom: -1px; width: 49px; height: 3px; border-radius: 2px; background: #126e3e; }
.tabs button { display: flex; align-items: center; height: 30px; padding: 0; border-radius: 4px; font-size: 16.5px; white-space: nowrap; }
.comments { width: 118px; margin-right: 10px; padding-left: 5px !important; gap: 6px; border: 1px solid #888; background: #fff; color: #262626; letter-spacing: -0.2px; }
.share { width: 90px; padding-left: 6px !important; gap: 5px; border: 0; background: #107c41; color: #fff; letter-spacing: -0.4px; }
.share svg:last-child { margin-left: 3px; }

/* ribbon */
.ribbon { display: flex; height: 125px; margin: 1px 10px 0; padding-top: 6px; border-radius: 9px; background: #fff; box-shadow: 0 1px 4px rgba(0,0,0,0.28); }
.group { display: flex; flex-direction: column; height: 111px; border-right: 1px solid #d0d0d0; }
.body { display: flex; height: 94px; }
.label { position: relative; height: 17px; margin-top: 4px; text-align: center; font-size: 12.5px; line-height: 22px; letter-spacing: -0.2px; }
.launch { position: absolute; right: 3px; top: 5px; color: #333; }
.clipboard { width: 139px; }
.font { width: 292px; }
.alignment { width: 374px; }
.number { width: 200px; }
.styles { width: 246px; }
.cells { width: 181px; }
.editing { width: 197px; }
.sensitivity { width: 92px; }
.addins { width: 78px; }
.clipboard .label { padding-right: 15px; }
.font .label { padding-right: 22px; }
.alignment .label, .number .label { padding-right: 21px; }
.editing .label, .sensitivity .label, .addins .label { padding-right: 2px; }
.collapse { margin: 97px 0 0 76px; }
.sep { width: 1px; height: 30px; background: #ccc; }

.big { display: flex; flex-direction: column; align-items: center; font-size: 15px; line-height: 20px; letter-spacing: -0.28px; text-align: center; white-space: nowrap; padding-top: 4px; }
.big > svg:first-child, .big > .az { height: 38px; margin-bottom: 2px; }
.big span .chev { display: inline-block; vertical-align: 2px; }
.big > .chev { margin-top: 6px; }
.big.off { color: #999; }
.big.off .chev { color: #999; }
.paste { width: 50px; margin-left: 16px; }
.paste > svg:first-child { height: 40px; margin: 0 -2px 2px 2px; }
.low > span { padding-top: 2px; }
.low > .chev { margin-top: 5px; }
.clip-tools { display: grid; grid-template-columns: 36px 18px; grid-template-rows: 31px 32px 31px; align-items: center; justify-items: center; width: 54px; margin-top: -2px; }
.clip-tools .chev { margin-left: 3px; }

.rows { display: flex; flex-direction: column; margin-top: 8px; }
.combo { display: flex; align-items: center; justify-content: space-between; height: 30px; padding: 0 4px 0 3px; border: 1px solid #8a8a8a; border-radius: 4px; font-size: 15px; letter-spacing: -0.3px; }
.combo.off { width: 180px; border-color: #dcdcdc; background: #efefef; color: #999; }
.font .rows, .number .rows { margin-left: 10px; }
.font-row1 { display: grid; grid-template-columns: 143px 63px 22px 20px; column-gap: 2px; }
.font-row1 .grow { margin-left: 5px; font-size: 20px; line-height: 27px; color: #444; position: relative; }
.font-row1 .shrink { margin-left: 15px; font-size: 17px; line-height: 31px; }
.grow svg { position: absolute; left: 13px; top: 5px; }
.shrink svg { left: 11px; }
.font-row2 { display: grid; grid-template-columns: 30px 34px 28px 20px 7px 27px 20px 7px 28px 18px 38px 8px; align-items: center; justify-items: center; height: 30px; margin-top: 10px; font-size: 17px; line-height: 22px; color: #444; }
.font-row2 > b, .font-row2 > i, .font-row2 > u { margin-top: -4px; }
.font-row2 i { font-family: "Liberation Serif", serif; font-size: 19px; }
.font-color { height: 25px; border-bottom: 5px solid #f00000; width: 20px; text-align: center; line-height: 18px; font-size: 18px; margin-top: -1px; }

.alignment .rows { margin-left: 9px; width: 170px; }
.alignment svg { fill: none; stroke: #9a9a9a; stroke-width: 1.5; }
.alignment .launch, .alignment .chev { stroke: none; }
.align-row { display: grid; grid-template-columns: 32px 32px 32px 3px 32px 32px; align-items: center; justify-items: center; height: 30px; margin-top: 10px; }
.align-row.first { grid-template-columns: 32px 32px 32px 3px 32px 10px; margin-top: 0; }
.up { margin-top: -7px; }
.down { margin-top: 9px; }
.orient { display: flex; position: relative; width: 20px; height: 22px; }
.orient em { position: absolute; left: -1px; top: -4px; font-style: normal; font-size: 13px; color: #999; transform: rotate(-45deg); }
.wrap-merge { height: 78px; margin-top: 7px; padding: 1px 0 0 12px; border-left: 1px solid #ccc; font-size: 15px; letter-spacing: -0.35px; color: #999; white-space: nowrap; }
.wrap-merge > div { display: flex; align-items: center; height: 30px; margin-bottom: 10px; gap: 5px; }
.wrap-merge .chev { margin-left: 18px; }
.wrap-icon { position: relative; display: flex; flex-direction: column; width: 19px; padding-left: 2px; font-size: 13px; letter-spacing: 0; }
.wrap-icon span { height: 12px; line-height: 12px; }
.wrap-icon svg { position: absolute; left: 9px; top: 14px; }

.number-row { display: grid; grid-template-columns: 28px 20px 36px 28px 6px 28px 38px; align-items: center; justify-items: center; height: 30px; margin-top: 10px; color: #8c8c8c; }
.dollar, .percent { font-size: 21px; }
.dec { display: flex; flex-direction: column; width: 19px; font-size: 11.5px; letter-spacing: -0.5px; }
.dec span { display: flex; align-items: center; justify-content: flex-end; height: 12px; line-height: 12px; }
.dec svg { fill: none; stroke: #999; stroke-width: 1.2; margin-right: 1px; }

.styles .body { padding-left: 8px; }
.styles .big:nth-child(1) { width: 96px; }
.styles .big:nth-child(2) { width: 74px; }
.styles .big:nth-child(3) { width: 58px; }
.cells .big { width: 54px; }
.cells .body { padding-left: 9px; }
.edit-tools { display: grid; grid-template-columns: 24px 18px; grid-template-rows: 31px 32px 31px; align-items: center; justify-items: center; margin: -2px 0 0 13px; width: 54px; column-gap: 1px; }
.edit-tools .nudge { margin-left: 16px; }
.editing .big { width: 62px; }
.editing .big:last-child { width: 56px; }
.az { display: flex; color: #999; }
.az em { display: flex; flex-direction: column; margin-top: -2px; font-style: normal; font-size: 17px; letter-spacing: 0; }
.az em span { height: 19px; line-height: 19px; }
.az svg { margin: 9px 0 0 3px; }
.sensitivity .big, .addins .big { width: 100%; }

/* formula bar */
.formula-bar { display: flex; height: 30px; margin: 9px 10px 8px; align-items: center; font-family: "Liberation Sans", sans-serif; font-size: 17.5px; }
.name-box, .fx-box, .formula-input { display: flex; align-items: center; justify-content: space-between; height: 30px; border: 1px solid #cfd1d0; border-radius: 5px; background: #fff; }
.name-box { width: 126px; padding: 0 5px 0 6px; }
.dots { margin: 0 12px 0 12px; }
.fx-box { width: 105px; padding: 0 1px 0 6px; }
.fx-box i { margin-left: 3px; font-family: "Liberation Serif", serif; font-size: 23px; line-height: 26px; }
.formula-input { flex: 1; margin-left: 6px; padding: 0 4px 0 12px; letter-spacing: 0.1px; }

/* grid */
.workspace { display: flex; height: 683px; }
.sheet { width: 1894px; height: 683px; overflow: hidden; background: #fff; }
.cols { display: grid; grid-template-columns: 34px 322px 322px 322px 322px repeat(6, 83px) 74px; height: 24px; border-bottom: 1px solid #a3a3a3; background: #eee; color: #444; font-size: 15px; line-height: 24px; text-align: center; }
.cols span { border-right: 1px solid #d6d6d6; height: 23px; }
.cols .sel { height: 24px; border-bottom: 2px solid #107c41; background: #dfdfdf; color: #1d7044; }
.cols span:last-child { padding-left: 9px; border: 0; }
.cols .corner { background: linear-gradient(135deg, transparent 50%, #dcdcdc 50%) 14px 4px / 15px 15px no-repeat; border: 0; }
.line { display: grid; grid-template: 24px / 34px 322px 322px 322px 322px; }
.line.tall { grid-template-rows: 49px; }
.num { border-right: 1px solid #a3a3a3; border-top: 1px solid #d9d9d9; background: #eee; color: #444; font-size: 16px; line-height: 25px; text-align: center; letter-spacing: -0.4px; }
.num.sel { border-right: 2px solid #107c41; background: #dfdfdf; color: #1d7044; }
.tall .num { padding-top: 26px; border-top: 0; line-height: 24px; }
.instructions { grid-column: 2 / 6; padding: 3px 0 0 3px; font-family: Lato, sans-serif; font-weight: 700; font-size: 16.9px; line-height: 24px; word-spacing: 0.9px; color: #000; white-space: nowrap; }
.head, .editing-cell { padding-left: 3px; background: #bdbdbd; color: #000; font-family: Lato, sans-serif; font-weight: 700; font-size: 16.9px; line-height: 26px; word-spacing: 1.4px; white-space: nowrap; }
.editing-cell { position: relative; width: 325px; height: 27px; margin: -1px 0 0 -2px; padding-left: 3px; border: 2px solid #1d7044; background: #fbd3b0; font-weight: 400; font-size: 16px; line-height: 25px; word-spacing: 0; z-index: 1; }
.editing-cell::before { content: ""; position: absolute; left: 61px; top: 1px; width: 1px; height: 22px; background: #000; }
.editing-cell::after { content: ""; position: absolute; right: -3px; bottom: -3px; width: 6px; height: 6px; border: 1px solid #fff; border-width: 1px 0 0 1px; background: #1d7044; }
.ibeam { position: absolute; left: 128px; top: 1px; }
.entry { border-right: 1px solid #a3a3a3; border-top: 1px solid #a3a3a3; background: #fbd3b0; }
.vscroll { display: flex; flex-direction: column; align-items: center; width: 21px; height: 686px; margin-left: 3px; padding: 6px 0 5px; border-radius: 10px; background: #f4f4f4; }
.vscroll .thumb { width: 11px; height: 55px; margin-top: 5px; border-radius: 6px; background: #6e6e6e; }
.vscroll .bottom { margin-top: auto; }

/* sheet tabs and status bar */
.sheet-tabs { display: flex; align-items: center; height: 40px; padding-left: 31px; }
.sheet-tabs > svg:nth-child(2) { margin-left: 34px; }
.sheet-tab { position: relative; width: 71px; height: 36px; margin: -4px 0 0 60px; padding: 3px 10px 0; border-radius: 0 0 5px 5px; background: #fff; font-size: 17.5px; font-weight: 600; letter-spacing: -0.6px; line-height: 26px; box-shadow: 0 1px 1px rgba(0,0,0,0.12); }
.sheet-tab span { display: block; width: 50px; height: 30px; border-bottom: 2px solid #126e3e; }
.sheet-tab::after { content: ""; position: absolute; right: -5px; top: 8px; width: 1px; height: 24px; background: #ccc; }
.sheet-tabs .add { margin: -2px 0 0 57px; }
.hscroll { display: flex; align-items: center; width: 720px; height: 21px; margin: -1px 0 0 893px; padding: 0 5px 0 12px; border-radius: 10px; background: #f5f5f5; }
.hscroll .thumb { flex: 1; height: 11px; margin-right: 9px; border-radius: 5px; background: #6e6e6e; }
.statusbar { display: flex; align-items: center; height: 28px; border-top: 1px solid #fff; border-bottom: 1px solid #aab4b8; background: #f4f4f4; font-size: 13px; letter-spacing: -0.05px; white-space: nowrap; }
.statusbar > * { flex: none; }
.mode { width: 61px; margin-left: 15px; font-size: 12.5px; letter-spacing: -0.15px; }
.access { width: 1463px; margin-left: 2px; }
.views { display: flex; gap: 33px; width: 141px; margin-left: 2px; fill: none; stroke: #9a9a9a; stroke-width: 1.3; }
.zoom { width: 125px; height: 9px; margin: 0 5px 0 6px; background: linear-gradient(#555, #555) 50% 50% / 1px 9px no-repeat, linear-gradient(#777, #777) 0 50% / 100% 1px no-repeat; }
.pct { margin-left: 17px; font-size: 12.5px; color: #8c8c8c; }

/* taskbar */
.taskbar { display: flex; height: 59px; background: #d9e1e7; }
.weather { position: relative; display: flex; width: 667px; padding: 9px 0 0 23px; line-height: 20px; font-size: 14.5px; letter-spacing: -0.1px; }
.weather p { margin-left: 8px; color: #111; }
.weather p span { color: #54585c; }
.badge { position: absolute; left: 37px; top: 7px; width: 19px; height: 20px; border-radius: 50%; background: #c42b1c; color: #fff; font-size: 12px; text-align: center; }
.apps { display: flex; align-items: center; width: 1010px; margin-top: -1px; }
.task-search { display: flex; align-items: center; width: 274px; height: 39px; margin: 0 14px 0 19px; padding-left: 12px; border: 1px solid #c8cfd2; border-radius: 20px; background: #f2f6f5; font-size: 16.5px; letter-spacing: -0.3px; color: #555; }
.task-search span { width: 163px; margin-left: 12px; }
.app { margin-right: 26px; }
.app.running { position: relative; width: 30px; margin-right: 25px; }
.running::after { content: ""; position: absolute; left: 11px; bottom: -9px; width: 8px; height: 4px; border-radius: 2px; background: #85898c; }
.app.running + .current { position: relative; width: 48px; height: 48px; margin-left: -9px; padding: 10px 10px 10px 9px; border-radius: 5px; background: #ebf1f3; }
.current::after { content: ""; position: absolute; left: 14px; bottom: 0; width: 20px; height: 4px; border-radius: 2px; background: #0f78d4; }
.apps > svg.app:nth-child(3) + .app + .running { margin-left: -1px; }
.tray { display: flex; align-items: center; width: 219px; }
.tray svg:nth-child(1) { margin: 0 26px 0 2px; }
.tray svg:nth-child(3) { margin: 0 9px 0 23px; }
.tray p { flex: 1; margin-top: -1px; text-align: right; font-size: 14.5px; line-height: 20px; letter-spacing: -0.1px; color: #111; }

/* floating screen share bar */
.sharing { position: absolute; left: 698px; top: 949px; display: flex; align-items: center; width: 528px; height: 62px; background: #fff; border: 1px solid #e2e2e2; box-shadow: 0 2px 3px rgba(0,0,0,0.3); font-size: 15px; white-space: nowrap; z-index: 2; }
.grip { width: 8px; height: 14px; margin-left: 11px; border: solid #d2d2d2; border-width: 0 3px; }
.msg { width: 304px; margin-left: 12px; letter-spacing: -0.38px; }
.sharing button { width: 133px; height: 48px; padding: 0; border: 0; border-radius: 24px; background: #0f5bd0; color: #fff; font-size: 15.5px; font-weight: 600; letter-spacing: -0.2px; }
.sharing a { margin-left: 13px; color: #0f5bd0; text-decoration: underline; letter-spacing: -0.3px; }
```
